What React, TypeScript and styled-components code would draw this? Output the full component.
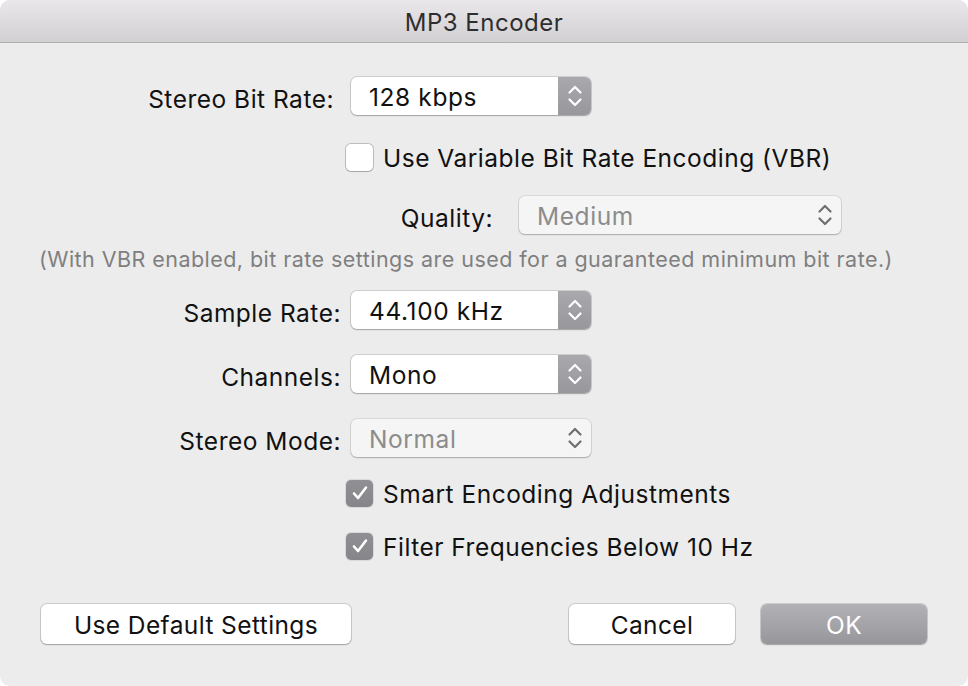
import React from "react";
import styled, { createGlobalStyle } from "styled-components";

const Global = createGlobalStyle`
  html, body { margin: 0; padding: 0; background: #ffffff; }
  body { font-family: Inter, "Liberation Sans", sans-serif; }
`;

const Window = styled.div`
  width: 968px;
  height: 686px;
  border-radius: 10px;
  overflow: hidden;
  background: #ececec;
  display: flex;
  flex-direction: column;
`;

const TitleBar = styled.div`
  height: 43px;
  flex: none;
  display: flex;
  align-items: center;
  justify-content: center;
  background: linear-gradient(#e9e7e9, #d2d0d2);
  border-bottom: 1px solid #b0b0b0;
  font-size: 24px;
  letter-spacing: 0.5px;
  color: #2e2e2e;
  padding-top: 2px;
  box-sizing: border-box;
`;

const Body = styled.div`
  flex: 1;
  display: flex;
  flex-direction: column;
  padding-top: 33px;
`;

const Row = styled.div<{ $mt?: number }>`
  height: 40px;
  flex: none;
  display: flex;
  align-items: center;
  margin-top: ${(p) => p.$mt ?? 0}px;
`;

const Label = styled.div<{ $w: number; $gap: number }>`
  width: ${(p) => p.$w}px;
  margin-right: ${(p) => p.$gap}px;
  text-align: right;
  font-size: 24.5px;
  letter-spacing: 0.5px;
  color: #111;
  flex: none;
  padding-top: 5px;
`;

const Select = styled.div<{ $w: number; $disabled?: boolean }>`
  width: ${(p) => p.$w}px;
  height: 38px;
  box-sizing: border-box;
  border-radius: 6px;
  background: ${(p) => (p.$disabled ? "#f5f5f5" : "#ffffff")};
  box-shadow: 0 0 0 1px rgba(0, 0, 0, ${(p) => (p.$disabled ? 0.08 : 0.12)}),
    0 1px 1.5px rgba(0, 0, 0, 0.22);
  display: flex;
  align-items: center;
  overflow: hidden;
  flex: none;
`;

const SelectText = styled.div<{ $disabled?: boolean }>`
  flex: 1;
  padding-left: 18px;
  padding-top: 1px;
  font-size: 24.5px;
  letter-spacing: 0.6px;
  color: ${(p) => (p.$disabled ? "#8c8c8c" : "#111")};
`;

const Stepper = styled.div<{ $disabled?: boolean }>`
  width: 33px;
  align-self: stretch;
  display: flex;
  align-items: center;
  justify-content: center;
  background: ${(p) => (p.$disabled ? "transparent" : "linear-gradient(#a9a8ad, #98979c)")};
`;

const CheckRow = styled.div<{ $mt?: number }>`
  height: 40px;
  flex: none;
  display: flex;
  align-items: center;
  padding-left: 346px;
  margin-top: ${(p) => p.$mt ?? 0}px;
`;

const Box = styled.div<{ $checked?: boolean }>`
  width: 27px;
  height: 27px;
  box-sizing: border-box;
  border-radius: 5px;
  flex: none;
  display: flex;
  align-items: center;
  justify-content: center;
  background: ${(p) => (p.$checked ? "linear-gradient(#908f94, #86858a)" : "#ffffff")};
  box-shadow: ${(p) =>
    p.$checked
      ? "0 0 0 1px rgba(0,0,0,0.08)"
      : "0 0 0 1px rgba(0,0,0,0.2), 0 1px 1px rgba(0,0,0,0.12)"};
`;

const CheckText = styled.div`
  margin-left: 10px;
  font-size: 24.5px;
  letter-spacing: 0.5px;
  color: #111;
  padding-top: 2px;
`;

const Note = styled.div`
  height: 40px;
  flex: none;
  display: flex;
  align-items: center;
  padding-left: 39px;
  margin-top: 4px;
  font-size: 21.5px;
  letter-spacing: 0.45px;
  color: #7f7f7f;
`;

const ButtonRow = styled.div`
  display: flex;
  align-items: center;
  padding: 0 41px;
  margin-top: 38px;
  height: 40px;
`;

const Button = styled.div<{ $w: number; $primary?: boolean }>`
  width: ${(p) => p.$w}px;
  height: 40px;
  box-sizing: border-box;
  border-radius: 6px;
  display: flex;
  align-items: center;
  justify-content: center;
  padding-top: 2px;
  font-size: 24.5px;
  letter-spacing: 0.4px;
  color: ${(p) => (p.$primary ? "#ffffff" : "#111")};
  background: ${(p) => (p.$primary ? "linear-gradient(#b2b1b5, #97969b)" : "#ffffff")};
  box-shadow: 0 0 0 1px rgba(0, 0, 0, 0.13), 0 1px 1.5px rgba(0, 0, 0, 0.22);
  flex: none;
`;

const Spacer = styled.div`
  flex: 1;
`;

const ButtonGap = styled.div`
  width: 26px;
  flex: none;
`;

const Arrows = ({ color }: { color: string }) => (
  <svg width="16" height="26" viewBox="0 0 16 26" fill="none">
    <path d="M2.5 9.5 L8 4 L13.5 9.5" stroke={color} strokeWidth="2.2" strokeLinecap="round" strokeLinejoin="round" />
    <path d="M2.5 16.5 L8 22 L13.5 16.5" stroke={color} strokeWidth="2.2" strokeLinecap="round" strokeLinejoin="round" />
  </svg>
);

const Check = () => (
  <svg width="18" height="16" viewBox="0 0 18 16" fill="none">
    <path d="M3 8.5 L7 13 L15 2.5" stroke="#ffffff" strokeWidth="2.6" strokeLinecap="round" strokeLinejoin="round" />
  </svg>
);

const PopUp = ({ w, value, disabled }: { w: number; value: string; disabled?: boolean }) => (
  <Select $w={w} $disabled={disabled}>
    <SelectText $disabled={disabled}>{value}</SelectText>
    <Stepper $disabled={disabled}>
      <Arrows color={disabled ? "#6f6f72" : "#ffffff"} />
    </Stepper>
  </Select>
);

export default function App() {
  return (
    <>
      <Global />
      <Window>
        <TitleBar>MP3 Encoder</TitleBar>
        <Body>
          <Row>
            <Label $w={334} $gap={17}>Stereo Bit Rate:</Label>
            <PopUp w={240} value="128 kbps" />
          </Row>
          <CheckRow $mt={21}>
            <Box />
            <CheckText>Use Variable Bit Rate Encoding (VBR)</CheckText>
          </CheckRow>
          <Row $mt={18}>
            <Label $w={493} $gap={26}>Quality:</Label>
            <PopUp w={322} value="Medium" disabled />
          </Row>
          <Note>(With VBR enabled, bit rate settings are used for a guaranteed minimum bit rate.)</Note>
          <Row $mt={11}>
            <Label $w={341} $gap={10}>Sample Rate:</Label>
            <PopUp w={240} value="44.100 kHz" />
          </Row>
          <Row $mt={24}>
            <Label $w={341} $gap={10}>Channels:</Label>
            <PopUp w={240} value="Mono" />
          </Row>
          <Row $mt={24}>
            <Label $w={341} $gap={10}>Stereo Mode:</Label>
            <PopUp w={240} value="Normal" disabled />
          </Row>
          <CheckRow $mt={15}>
            <Box $checked>
              <Check />
            </Box>
            <CheckText>Smart Encoding Adjustments</CheckText>
          </CheckRow>
          <CheckRow $mt={13}>
            <Box $checked>
              <Check />
            </Box>
            <CheckText>Filter Frequencies Below 10 Hz</CheckText>
          </CheckRow>
          <ButtonRow>
            <Button $w={310}>Use Default Settings</Button>
            <Spacer />
            <Button $w={166}>Cancel</Button>
            <ButtonGap />
            <Button $w={166} $primary>OK</Button>
          </ButtonRow>
        </Body>
      </Window>
    </>
  );
}
